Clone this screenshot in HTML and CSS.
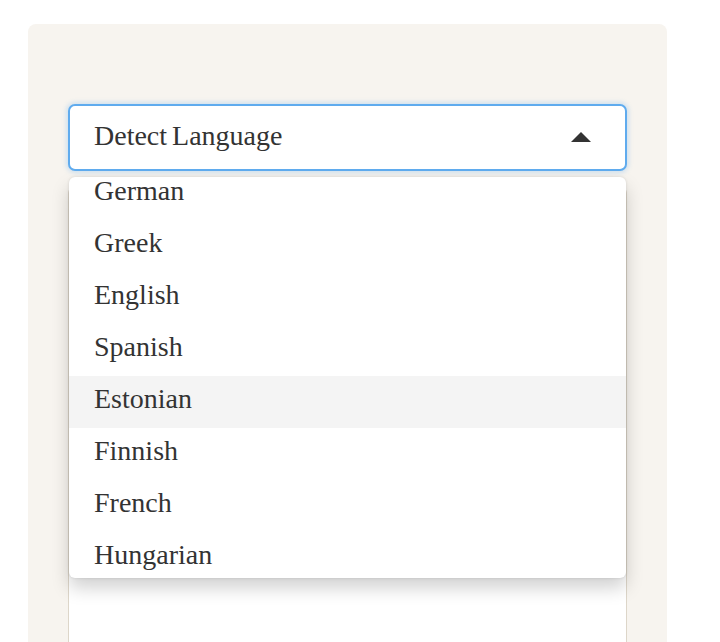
FILE: index.html
```html
<!DOCTYPE html>
<html>
<head>
<meta charset="utf-8">
<link rel="stylesheet" href="styles.css">
</head>
<body>
<div class="page">
  <div class="card">
    <div class="select-wrap">
      <div class="select">
        <span class="select-label">Detect Language</span>
        <span class="caret"></span>
      </div>
      <div class="menu">
        <ul class="menu-list">
          <li class="item">German</li>
          <li class="item">Greek</li>
          <li class="item">English</li>
          <li class="item">Spanish</li>
          <li class="item active">Estonian</li>
          <li class="item">Finnish</li>
          <li class="item">French</li>
          <li class="item">Hungarian</li>
        </ul>
      </div>
    </div>
    <div class="textbox"></div>
  </div>
</div>
</body>
</html>
```

FILE: styles.css
```css
html, body {
  margin: 0;
  padding: 0;
  background: #ffffff;
}
body {
  font-family: "Liberation Serif", "Times New Roman", serif;
  color: #333333;
}
.page {
  padding: 24px 0 0 28px;
  height: 642px;
  overflow: hidden;
  box-sizing: border-box;
}
.card {
  width: 639px;
  height: 700px;
  background: #f7f4ef;
  border-radius: 8px;
  padding: 80px 40px 0 40px;
  box-sizing: border-box;
  display: flex;
  flex-direction: column;
  gap: 16px;
}
.select-wrap {
  position: relative;
}
.select {
  height: 67px;
  box-sizing: border-box;
  border: 2px solid #5fabee;
  border-radius: 7px;
  background: #ffffff;
  box-shadow: 0 0 4px 2px rgba(95, 171, 238, 0.25);
  display: flex;
  align-items: center;
  justify-content: space-between;
  padding: 0 34px 0 24px;
}
.select-label {
  font-size: 28px;
  word-spacing: -2px;
  margin-top: -4px;
}
.caret {
  width: 0;
  height: 0;
  border-left: 10px solid transparent;
  border-right: 10px solid transparent;
  border-bottom: 10px solid #333333;
  margin-top: -2px;
}
.menu {
  position: absolute;
  top: 73px;
  left: 1px;
  right: 1px;
  height: 401px;
  background: #ffffff;
  border-radius: 6px;
  box-shadow: 0 10px 18px rgba(0, 0, 0, 0.18), 0 0 3px rgba(0, 0, 0, 0.12);
  overflow: hidden;
  z-index: 2;
}
.menu-list {
  list-style: none;
  margin: -9px 0 0 0;
  padding: 0;
}
.item {
  height: 52px;
  box-sizing: border-box;
  display: flex;
  align-items: center;
  padding: 0 0 6px 25px;
  font-size: 28px;
}
.item.active {
  background: #f4f4f4;
}
.textbox {
  height: 500px;
  background: #ffffff;
  border: 1px solid #ddd6c9;
  border-radius: 6px;
}
```
